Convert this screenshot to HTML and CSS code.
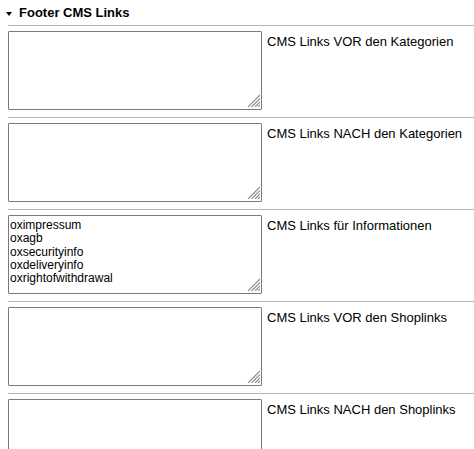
FILE: index.html
```html
<!DOCTYPE html>
<html>
<head>
<meta charset="utf-8">
<link rel="stylesheet" href="styles.css">
</head>
<body>
<div class="group">
  <div class="group-head"><span class="caret"></span><span class="title">Footer CMS Links</span></div>
  <div class="row">
    <div class="field-wrap">
      <textarea class="field"></textarea>
      <svg class="grip" width="13" height="13" viewBox="0 0 13 13"><path d="M1 13L13 1M4.5 13L13 4.5M8 13L13 8M11 13L13 11"/></svg>
    </div>
    <div class="label">CMS Links VOR den Kategorien</div>
  </div>
  <div class="row">
    <div class="field-wrap">
      <textarea class="field"></textarea>
      <svg class="grip" width="13" height="13" viewBox="0 0 13 13"><path d="M1 13L13 1M4.5 13L13 4.5M8 13L13 8M11 13L13 11"/></svg>
    </div>
    <div class="label">CMS Links NACH den Kategorien</div>
  </div>
  <div class="row">
    <div class="field-wrap">
      <textarea class="field">oximpressum
oxagb
oxsecurityinfo
oxdeliveryinfo
oxrightofwithdrawal</textarea>
      <svg class="grip" width="13" height="13" viewBox="0 0 13 13"><path d="M1 13L13 1M4.5 13L13 4.5M8 13L13 8M11 13L13 11"/></svg>
    </div>
    <div class="label">CMS Links für Informationen</div>
  </div>
  <div class="row">
    <div class="field-wrap">
      <textarea class="field"></textarea>
      <svg class="grip" width="13" height="13" viewBox="0 0 13 13"><path d="M1 13L13 1M4.5 13L13 4.5M8 13L13 8M11 13L13 11"/></svg>
    </div>
    <div class="label">CMS Links VOR den Shoplinks</div>
  </div>
  <div class="row">
    <div class="field-wrap">
      <textarea class="field"></textarea>
      <svg class="grip" width="13" height="13" viewBox="0 0 13 13"><path d="M1 13L13 1M4.5 13L13 4.5M8 13L13 8M11 13L13 11"/></svg>
    </div>
    <div class="label">CMS Links NACH den Shoplinks</div>
  </div>
</div>
</body>
</html>
```
FILE: styles.css
```css
html, body {
  margin: 0;
  padding: 0;
  background: #fff;
}
body {
  font-family: "Liberation Sans", Arial, sans-serif;
  color: #000;
  overflow: hidden;
}
.group {
  width: 474px;
}
.group-head {
  height: 25px;
  display: flex;
  align-items: flex-start;
  padding-left: 6px;
  box-sizing: border-box;
}
.caret {
  width: 0;
  height: 0;
  border-left: 3px solid transparent;
  border-right: 3px solid transparent;
  border-top: 4px solid #000;
  margin-top: 12px;
}
.title {
  font-weight: bold;
  font-size: 13px;
  line-height: 15px;
  margin-top: 5px;
  margin-left: 7px;
}
.row {
  margin-left: 8px;
  border-top: 1px solid #b4b4b4;
  padding: 5px 0 7px;
  display: flex;
  align-items: flex-start;
}
.field-wrap {
  position: relative;
  width: 254px;
  height: 79px;
  flex: none;
}
.field {
  display: block;
  width: 254px;
  height: 79px;
  box-sizing: border-box;
  border: 1px solid #7a7a7a;
  border-radius: 1px;
  padding: 3px 1px 1px;
  margin: 0;
  font-family: "Liberation Sans", Arial, sans-serif;
  font-size: 12px;
  line-height: 13.3px;
  color: #000;
  background: #fff;
  resize: none;
  overflow: hidden;
}
.grip {
  position: absolute;
  right: 2px;
  bottom: 3px;
  stroke: #8c8c8c;
  stroke-width: 1.1;
  fill: none;
  pointer-events: none;
}
.label {
  font-size: 13px;
  line-height: 15px;
  margin-left: 5px;
  padding-top: 3px;
}
```
